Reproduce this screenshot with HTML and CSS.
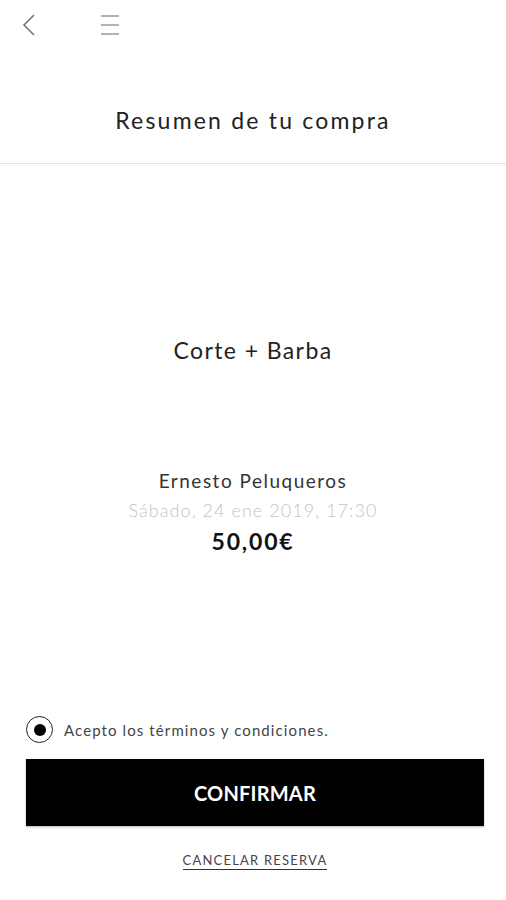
FILE: index.html
```html
<!DOCTYPE html>
<html>
<head>
  <title>Resumen de tu compra</title>
  <link rel="stylesheet" href="styles.css">
</head>
<body>
  <div class="screen">
    <nav class="topbar">
      <button class="icon-btn back" aria-label="Volver">
        <svg width="14" height="22" viewBox="0 0 14 22"><path d="M12 1 L2 11 L12 21" fill="none" stroke="#777" stroke-width="1.6"/></svg>
      </button>
      <button class="icon-btn menu" aria-label="Menú">
        <svg width="20" height="22" viewBox="0 0 20 22"><path d="M1 2 H19 M1 11 H19 M1 20 H19" fill="none" stroke="#999" stroke-width="1.6"/></svg>
      </button>
    </nav>

    <header class="title-bar">
      <h1>Resumen de tu compra</h1>
    </header>

    <main class="summary">
      <p class="service">Corte + Barba</p>
      <div class="details">
        <p class="shop">Ernesto Peluqueros</p>
        <p class="date">Sábado, 24 ene 2019, 17:30</p>
        <p class="price">50,00€</p>
      </div>
    </main>

    <footer class="actions">
      <label class="terms">
        <span class="radio"><span class="dot"></span></span>
        Acepto los términos y condiciones.
      </label>
      <button class="confirm">CONFIRMAR</button>
      <a class="cancel" href="#">CANCELAR RESERVA</a>
    </footer>
  </div>
</body>
</html>
```

FILE: styles.css
```css
* {
  margin: 0;
  padding: 0;
  box-sizing: border-box;
}

body {
  background: #fff;
  color: #222;
  font-family: Lato, "Open Sans", sans-serif;
  width: 506px;
  height: 900px;
}

.screen {
  display: flex;
  flex-direction: column;
  height: 900px;
}

.topbar {
  display: flex;
  align-items: center;
  height: 50px;
  padding: 0 0 0 22px;
  gap: 64px;
}

.icon-btn {
  background: none;
  border: none;
  display: flex;
  align-items: center;
  height: 22px;
}

.title-bar {
  height: 114px;
  border-bottom: 1px solid #e3e3e3;
  display: flex;
  align-items: center;
  justify-content: center;
  padding-top: 26px;
}

h1 {
  font-size: 23px;
  font-weight: 400;
  letter-spacing: 2.2px;
  color: #222;
}

.summary {
  flex: 1;
  display: flex;
  flex-direction: column;
  align-items: center;
  text-align: center;
}

.service {
  font-size: 23px;
  letter-spacing: 1.4px;
  margin-top: 172px;
  color: #222;
}

.details {
  margin-top: 102px;
}

.shop {
  font-size: 19px;
  letter-spacing: 1.5px;
  line-height: 30px;
  color: #333;
}

.date {
  font-size: 18px;
  letter-spacing: 1.05px;
  line-height: 28px;
  color: #c4c4c4;
  font-weight: 300;
}

.price {
  font-size: 23px;
  font-weight: 700;
  letter-spacing: 1.8px;
  line-height: 35px;
  color: #111;
}

.actions {
  padding: 0 22px 30px 26px;
  display: flex;
  flex-direction: column;
}

.terms {
  display: flex;
  align-items: center;
  gap: 11px;
  font-size: 15px;
  letter-spacing: 1.1px;
  color: #444;
  margin-bottom: 16px;
}

.radio {
  width: 27px;
  height: 27px;
  border: 1.6px solid #222;
  border-radius: 50%;
  display: flex;
  align-items: center;
  justify-content: center;
}

.dot {
  width: 12px;
  height: 12px;
  border-radius: 50%;
  background: #000;
}

.confirm {
  height: 67px;
  background: #000;
  color: #fff;
  border: none;
  font-family: inherit;
  font-size: 20px;
  font-weight: 700;
  letter-spacing: 0.2px;
  box-shadow: 0 1px 2px rgba(0, 0, 0, 0.3);
}

.cancel {
  align-self: center;
  margin-top: 26px;
  font-size: 13px;
  letter-spacing: 1.2px;
  color: #444;
  text-decoration: none;
  border-bottom: 1.5px solid #333;
  line-height: 17px;
}
```
